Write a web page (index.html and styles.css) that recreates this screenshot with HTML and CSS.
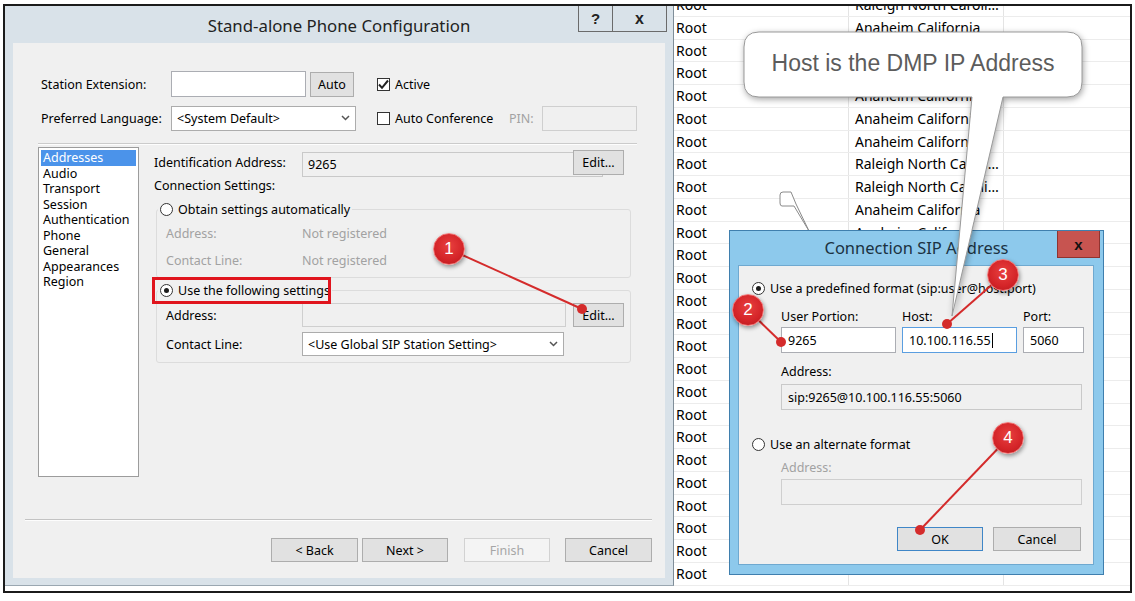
FILE: index.html
```html
<!DOCTYPE html>
<html lang="en">
<head>
  <meta charset="UTF-8" />
  <title>Stand-alone Phone Configuration</title>
  <link rel="stylesheet" href="styles.css">
</head>
<body>
<div class="page">

  <div class="frame">
    <!-- main wizard window -->
    <div class="dialog">
      <div class="titlebar">
        <div class="title">Stand-alone Phone Configuration</div>
        <div class="caption">
          <span class="cap-btn">?</span>
          <span class="cap-btn cap-close">x</span>
        </div>
      </div>

      <div class="client">
        <div class="body">
          <div class="top-grid">
            <span class="lbl">Station Extension:</span>
            <div class="pair"><span class="input ext"></span><span class="btn auto">Auto</span></div>
            <span></span>
            <div class="check"><span class="box"><svg width="13" height="13" viewBox="0 0 13 13"><path d="M2 6.5 L5 9.8 L11 2.5" fill="none" stroke="#222" stroke-width="2"/></svg></span>Active</div>
            <span></span>
            <span></span>

            <span class="lbl">Preferred Language:</span>
            <div class="select lang">&lt;System Default&gt;<svg class="chev" width="9" height="6" viewBox="0 0 9 6"><polyline points="1,1 4.5,4.5 8,1" fill="none" stroke="#555" stroke-width="1.5"/></svg></div>
            <span></span>
            <div class="check"><span class="box"></span>Auto Conference</div>
            <span class="muted pin-lbl">PIN:</span>
            <span class="input disabled"></span>
          </div>

          <div class="sep"></div>

          <div class="main">
            <ul class="nav">
              <li class="selected">Addresses</li>
              <li>Audio</li>
              <li>Transport</li>
              <li>Session</li>
              <li>Authentication</li>
              <li>Phone</li>
              <li>General</li>
              <li>Appearances</li>
              <li>Region</li>
            </ul>

            <div class="panel">
              <div class="ident">
                <span>Identification Address:</span>
                <span class="input readonly">9265</span>
                <span class="btn">Edit...</span>
              </div>
              <div class="conn-lbl">Connection Settings:</div>

              <fieldset class="grp grp-auto">
                <legend><span class="radio"></span>Obtain settings automatically</legend>
                <div class="grp-row muted"><span>Address:</span><span>Not registered</span></div>
                <div class="grp-row muted"><span>Contact Line:</span><span>Not registered</span></div>
              </fieldset>

              <fieldset class="grp grp-manual">
                <legend><span class="radio on"></span>Use the following settings</legend>
                <div class="grp-row"><span>Address:</span><span class="input disabled"></span><span class="btn">Edit...</span></div>
                <div class="grp-row"><span>Contact Line:</span><span class="select contact">&lt;Use Global SIP Station Setting&gt;<svg class="chev" width="9" height="6" viewBox="0 0 9 6"><polyline points="1,1 4.5,4.5 8,1" fill="none" stroke="#555" stroke-width="1.5"/></svg></span></div>
              </fieldset>
            </div>
          </div>
        </div>

        <div class="footer">
          <div class="sep"></div>
          <div class="buttons">
            <span class="btn wide back">&lt; Back</span>
            <span class="btn wide next">Next &gt;</span>
            <span class="btn wide off">Finish</span>
            <span class="btn wide last">Cancel</span>
          </div>
        </div>
      </div>
    </div>

    <!-- spreadsheet behind -->
    <div class="sheet">
      <div class="rows">
        <div class="row"><span class="c1">Root</span><span class="c2">Raleigh North Carolina</span><span class="c3"></span></div>
        <div class="row"><span class="c1">Root</span><span class="c2">Anaheim California</span><span class="c3"></span></div>
        <div class="row"><span class="c1">Root</span><span class="c2">Anaheim California</span><span class="c3"></span></div>
        <div class="row"><span class="c1">Root</span><span class="c2">Anaheim California</span><span class="c3"></span></div>
        <div class="row"><span class="c1">Root</span><span class="c2">Anaheim California</span><span class="c3"></span></div>
        <div class="row"><span class="c1">Root</span><span class="c2">Anaheim California</span><span class="c3"></span></div>
        <div class="row"><span class="c1">Root</span><span class="c2">Anaheim California</span><span class="c3"></span></div>
        <div class="row"><span class="c1">Root</span><span class="c2">Raleigh North Carolina</span><span class="c3"></span></div>
        <div class="row"><span class="c1">Root</span><span class="c2">Raleigh North Carolina</span><span class="c3"></span></div>
        <div class="row"><span class="c1">Root</span><span class="c2">Anaheim California</span><span class="c3"></span></div>
        <div class="row"><span class="c1">Root</span><span class="c2">Anaheim California</span><span class="c3"></span></div>
        <div class="row"><span class="c1">Root</span><span class="c2">Anaheim California</span><span class="c3"></span></div>
        <div class="row"><span class="c1">Root</span><span class="c2">Anaheim California</span><span class="c3"></span></div>
        <div class="row"><span class="c1">Root</span><span class="c2">Anaheim California</span><span class="c3"></span></div>
        <div class="row"><span class="c1">Root</span><span class="c2">Anaheim California</span><span class="c3"></span></div>
        <div class="row"><span class="c1">Root</span><span class="c2">Anaheim California</span><span class="c3"></span></div>
        <div class="row"><span class="c1">Root</span><span class="c2">Anaheim California</span><span class="c3"></span></div>
        <div class="row"><span class="c1">Root</span><span class="c2">Anaheim California</span><span class="c3"></span></div>
        <div class="row"><span class="c1">Root</span><span class="c2">Anaheim California</span><span class="c3"></span></div>
        <div class="row"><span class="c1">Root</span><span class="c2">Anaheim California</span><span class="c3"></span></div>
        <div class="row"><span class="c1">Root</span><span class="c2">Anaheim California</span><span class="c3"></span></div>
        <div class="row"><span class="c1">Root</span><span class="c2">Anaheim California</span><span class="c3"></span></div>
        <div class="row"><span class="c1">Root</span><span class="c2">Anaheim California</span><span class="c3"></span></div>
        <div class="row"><span class="c1">Root</span><span class="c2">Anaheim California</span><span class="c3"></span></div>
        <div class="row"><span class="c1">Root</span><span class="c2">&lt;Default Location&gt;</span><span class="c3"></span></div>
        <div class="row"><span class="c1">Root</span><span class="c2"></span><span class="c3"></span></div>
      </div>
    </div>
  </div>

  <!-- annotation: highlight box -->
  <div class="highlight"></div>

  <!-- tail of a bubble that is cut off -->
  <svg class="overlay" width="1135" height="601">
    <path d="M780,195 Q780,192 783,192 L791,192 L796,204 L809,231 L794,206 L782,206 Q780,206 780,203 Z" fill="#fff" stroke="#8a8a8a" stroke-width="1"/>
  </svg>

  <!-- SIP address dialog -->
  <div class="sip">
    <div class="sip-title">Connection SIP Address<span class="sip-close">x</span></div>
    <div class="sip-client">
      <div class="opt"><span class="radio on"></span>Use a predefined format (sip:user@host:port)</div>
      <div class="indent">
        <div class="sip-grid">
          <span>User Portion:</span><span>Host:</span><span>Port:</span>
          <span class="input tall">9265</span>
          <span class="input tall focus">10.100.116.55<i class="caret"></i></span>
          <span class="input tall">5060</span>
        </div>
        <div class="sip-lbl">Address:</div>
        <div class="input tall readonly">sip:9265@10.100.116.55:5060</div>
      </div>
      <div class="opt opt2"><span class="radio"></span>Use an alternate format</div>
      <div class="indent">
        <div class="sip-lbl muted alt">Address:</div>
        <div class="input tall disabled alt-box"></div>
      </div>
      <div class="sip-buttons">
        <span class="btn wide ok">OK</span>
        <span class="btn wide cancel">Cancel</span>
      </div>
    </div>
  </div>

  <!-- callout bubble -->
  <svg class="overlay callout-shape" width="1135" height="601">
    <path d="M759,32 H1067 Q1082,32 1082,47 V82 Q1082,97 1067,97 H1003 L952,316 L972,97 H759 Q744,97 744,82 V47 Q744,32 759,32 Z" fill="#fff" stroke="#9a9a9a" stroke-width="1"/>
  </svg>
  <div class="callout-text">Host is the DMP IP Address</div>

  <!-- numbered markers -->
  <svg class="overlay" width="1135" height="601">
    <g stroke="#d42b2b" stroke-width="2">
      <line x1="449" y1="249" x2="582" y2="309"/>
      <line x1="748" y1="310" x2="781" y2="342"/>
      <line x1="1003" y1="275" x2="947" y2="324"/>
      <line x1="1008" y1="438" x2="920" y2="530"/>
    </g>
    <g fill="#d42b2b">
      <circle cx="582" cy="309" r="5"/>
      <circle cx="781" cy="342" r="5"/>
      <circle cx="947" cy="324" r="5"/>
      <circle cx="920" cy="530" r="5"/>
    </g>
  </svg>
  <span class="marker m1">1</span>
  <span class="marker m2">2</span>
  <span class="marker m3">3</span>
  <span class="marker m4">4</span>

</div>
</body>
</html>
```

FILE: styles.css
```css
* {
  box-sizing: border-box;
}

body {
  margin: 0;
  background: #fff;
  font-family: "Noto Sans", "Open Sans", sans-serif;
  font-size: 12.5px;
  color: #000;
}

.page {
  position: relative;
  width: 1135px;
  height: 601px;
  overflow: hidden;
}

.frame {
  margin: 4px 0 0 3px;
  width: 1129px;
  height: 589px;
  border: 2px solid #1b1b1b;
  display: flex;
  align-items: flex-start;
}

/* ---------- main dialog ---------- */

.dialog {
  width: 669px;
  height: 580px;
  flex: none;
  background: #d9e2e9;
  border-right: 1px solid #7f8e99;
  border-bottom: 1px solid #9aa7b1;
  display: flex;
  flex-direction: column;
}

.titlebar {
  height: 37px;
  display: flex;
  position: relative;
  justify-content: center;
  align-items: center;
}

.title {
  font-size: 16.8px;
  color: #222;
  padding-top: 1px;
}

.caption {
  position: absolute;
  right: 6px;
  top: 0;
  display: flex;
}

.cap-btn {
  height: 26px;
  width: 35px;
  border: 1px solid #6b6b6b;
  border-top: none;
  font-family: "Liberation Sans", Arial, sans-serif;
  font-weight: bold;
  font-size: 15px;
  display: flex;
  align-items: center;
  justify-content: center;
  color: #222;
}

.cap-close {
  width: 54px;
  border-left: none;
  font-size: 16px;
}

.client {
  margin: 0 8px;
  height: 535px;
  background: #f0f0f0;
  display: flex;
  flex-direction: column;
}

.body {
  padding: 28px 28px 0 25px;
}

.top-grid {
  display: grid;
  grid-template-columns: 133px 185px 20px 133px 33px 95px;
  grid-template-rows: 26px 26px;
  row-gap: 8px;
  align-items: center;
}

.lbl {
  padding-left: 3px;
}

.pair {
  display: flex;
  gap: 4px;
  align-items: center;
}

.input {
  display: flex;
  align-items: center;
  height: 25px;
  background: #fff;
  border: 1px solid #abadb3;
  padding: 0 5px;
  white-space: nowrap;
}

.ext {
  width: 135px;
  height: 26px;
}

.input.disabled {
  background: #f0f0f0;
  border-color: #cfcfcf;
}

.input.readonly {
  background: #f0f0f0;
  border-color: #c9c9c9;
}

.btn {
  display: flex;
  align-items: center;
  justify-content: center;
  height: 25px;
  background: #e1e1e1;
  border: 1px solid #adadad;
  color: #000;
}

.auto {
  width: 44px;
}

.check {
  display: flex;
  align-items: center;
}

.box {
  width: 13px;
  height: 13px;
  margin: 0 5px 0 1px;
  border: 1px solid #333;
  background: #fff;
  display: flex;
}

.box svg {
  margin: -1px;
}

.muted {
  color: #a2a2a2;
}

.select {
  display: flex;
  align-items: center;
  justify-content: space-between;
  height: 25px;
  background: #fff;
  border: 1px solid #acacac;
  padding: 0 5px 0 5px;
}

.chev {
  flex: none;
}

.sep {
  margin-top: 12px;
  border-top: 1px solid #cbcbcb;
  border-bottom: 1px solid #fdfdfd;
}

.main {
  display: flex;
  margin-top: 2px;
}

.nav {
  list-style: none;
  margin: 0;
  width: 101px;
  height: 330px;
  flex: none;
  padding: 2px;
  background: #fff;
  border: 1px solid #9c9c9c;
  line-height: 15.5px;
}

.nav li {
  padding-left: 2px;
}

.nav .selected {
  background: #4b93ea;
  color: #fff;
}

.panel {
  flex: 1;
  margin-left: 15px;
}

.ident {
  margin-top: 1px;
  display: grid;
  grid-template-columns: 141px 264px 51px;
  column-gap: 7px;
  align-items: center;
}

.conn-lbl {
  margin-top: 1px;
  line-height: 16px;
}

.grp {
  margin: 7px 6px 0 2px;
  padding: 6px 0 7px 0;
  border: 1px solid #dcdcdc;
  border-radius: 3px;
  min-inline-size: 0;
}

.grp legend {
  display: flex;
  align-items: center;
  height: 16px;
  margin-left: 1px;
  padding: 0 2px;
}

.radio {
  width: 13px;
  height: 13px;
  border: 1px solid #333;
  border-radius: 50%;
  background: #fff;
  margin-right: 5px;
  flex: none;
  display: flex;
  align-items: center;
  justify-content: center;
}

.radio.on::after {
  content: "";
  width: 5px;
  height: 5px;
  border-radius: 50%;
  background: #1c1c1c;
}

.grp-row {
  display: grid;
  grid-template-columns: 129px 264px 51px;
  column-gap: 7px;
  align-items: center;
  padding-left: 9px;
  height: 20px;
}

.grp-auto .grp-row + .grp-row {
  margin-top: 7px;
}

.grp-manual {
  margin-top: 4px;
  padding: 5px 0 6px 0;
}

.grp-manual .grp-row {
  height: 24px;
}

.grp-manual .grp-row + .grp-row {
  margin-top: 5px;
}

.grp-manual .input,
.grp-manual .btn,
.contact {
  height: 24px;
}

.contact {
  width: 262px;
}

.footer {
  margin-top: auto;
  padding: 0 13px 16px 12px;
}

.footer .sep {
  margin-top: 0;
  border-top-color: #c3c3c3;
}

.buttons {
  margin-top: 17px;
  display: flex;
  justify-content: flex-end;
}

.wide {
  width: 87px;
  height: 24px;
}

.buttons .next {
  width: 86px;
  margin-left: 4px;
}

.buttons .off {
  width: 86px;
  margin-left: 16px;
  background: #f4f4f4;
  border-color: #d2d2d2;
  color: #a6a6a6;
}

.buttons .last {
  margin-left: 15px;
}

/* ---------- spreadsheet ---------- */

.sheet {
  flex: 1;
  height: 585px;
  overflow: hidden;
  background: #fff;
  font-size: 14px;
}

.rows {
  margin-top: -12px;
}

.row {
  display: flex;
  height: 22.75px;
  line-height: 22px;
  border-bottom: 1px solid #ececec;
}

.c1 {
  width: 175px;
  padding-left: 2px;
  border-right: 1px solid #e4e4e4;
}

.c2 {
  width: 155px;
  padding-left: 6px;
  border-right: 1px solid #e4e4e4;
  white-space: nowrap;
  overflow: hidden;
  text-overflow: ellipsis;
}

/* ---------- overlays ---------- */

.overlay {
  position: absolute;
  left: 0;
  top: 0;
  pointer-events: none;
}

.highlight {
  position: absolute;
  left: 152px;
  top: 277px;
  width: 179px;
  height: 27px;
  border: 3px solid #e0141d;
}

.sip {
  position: absolute;
  left: 729px;
  top: 230px;
  width: 375px;
  height: 345px;
  background: #8dc9ec;
  border: 1px solid #3f7fae;
  display: flex;
  flex-direction: column;
}

.sip-title {
  height: 34px;
  position: relative;
  display: flex;
  align-items: center;
  justify-content: center;
  font-size: 16.5px;
  color: #1b3242;
  padding-bottom: 1px;
}

.sip-close {
  position: absolute;
  right: 3px;
  top: 0;
  width: 43px;
  height: 27px;
  background: #c75450;
  border: 1px solid #8f3330;
  border-top: none;
  font-family: "Liberation Sans", Arial, sans-serif;
  font-weight: bold;
  font-size: 15px;
  color: #111;
  display: flex;
  align-items: center;
  justify-content: center;
}

.sip-client {
  margin: 0 9px 9px 8px;
  flex: 1;
  background: #f0f0f0;
  border: 1px solid #6fa9d0;
  padding: 14px 12px 0 13px;
}

.opt {
  display: flex;
  align-items: center;
  height: 16px;
}

.opt2 {
  margin-top: 26px;
}

.indent {
  padding-left: 29px;
}

.sip-grid {
  margin-top: 12px;
  display: grid;
  grid-template-columns: 115px 115px 61px;
  grid-template-rows: 16px 26px;
  column-gap: 6px;
  row-gap: 3px;
  align-items: center;
}

.tall {
  height: 26px;
  padding-left: 6px;
}

.focus {
  border-color: #5a9ee0;
}

.caret {
  display: inline-block;
  width: 1px;
  height: 15px;
  background: #000;
  margin-left: 1px;
}

.sip-lbl {
  margin-top: 11px;
  line-height: 16px;
}

.readonly {
  margin-top: 4px;
  width: 301px;
}

.sip-lbl.alt {
  margin-top: 8px;
}

.alt-box {
  margin-top: 3px;
  width: 301px;
}

.sip-buttons {
  margin-top: 22px;
  display: flex;
  justify-content: flex-end;
}

.ok {
  width: 86px;
  border-color: #3f86c7;
}

.cancel {
  width: 88px;
  margin-left: 10px;
}

.callout-shape {
  filter: drop-shadow(1px 2px 3px rgba(0, 0, 0, 0.35));
}

.callout-text {
  position: absolute;
  left: 744px;
  top: 32px;
  width: 338px;
  height: 62px;
  display: flex;
  align-items: center;
  justify-content: center;
  font-family: "Liberation Sans", Arial, sans-serif;
  font-size: 23px;
  color: #5c5c5c;
}

.marker {
  position: absolute;
  width: 32px;
  height: 32px;
  border-radius: 50%;
  background: radial-gradient(circle at 50% 40%, #e8403f 0%, #d42428 60%, #b3181c 100%);
  border: 1px solid #f17a7a;
  box-shadow: 1px 2px 4px rgba(0, 0, 0, 0.4);
  color: #fff;
  font-family: "Liberation Sans", Arial, sans-serif;
  font-size: 17px;
  display: flex;
  align-items: center;
  justify-content: center;
}

.m1 {
  left: 433px;
  top: 233px;
}

.m2 {
  left: 732px;
  top: 294px;
}

.m3 {
  left: 987px;
  top: 259px;
}

.m4 {
  left: 992px;
  top: 422px;
}
```
